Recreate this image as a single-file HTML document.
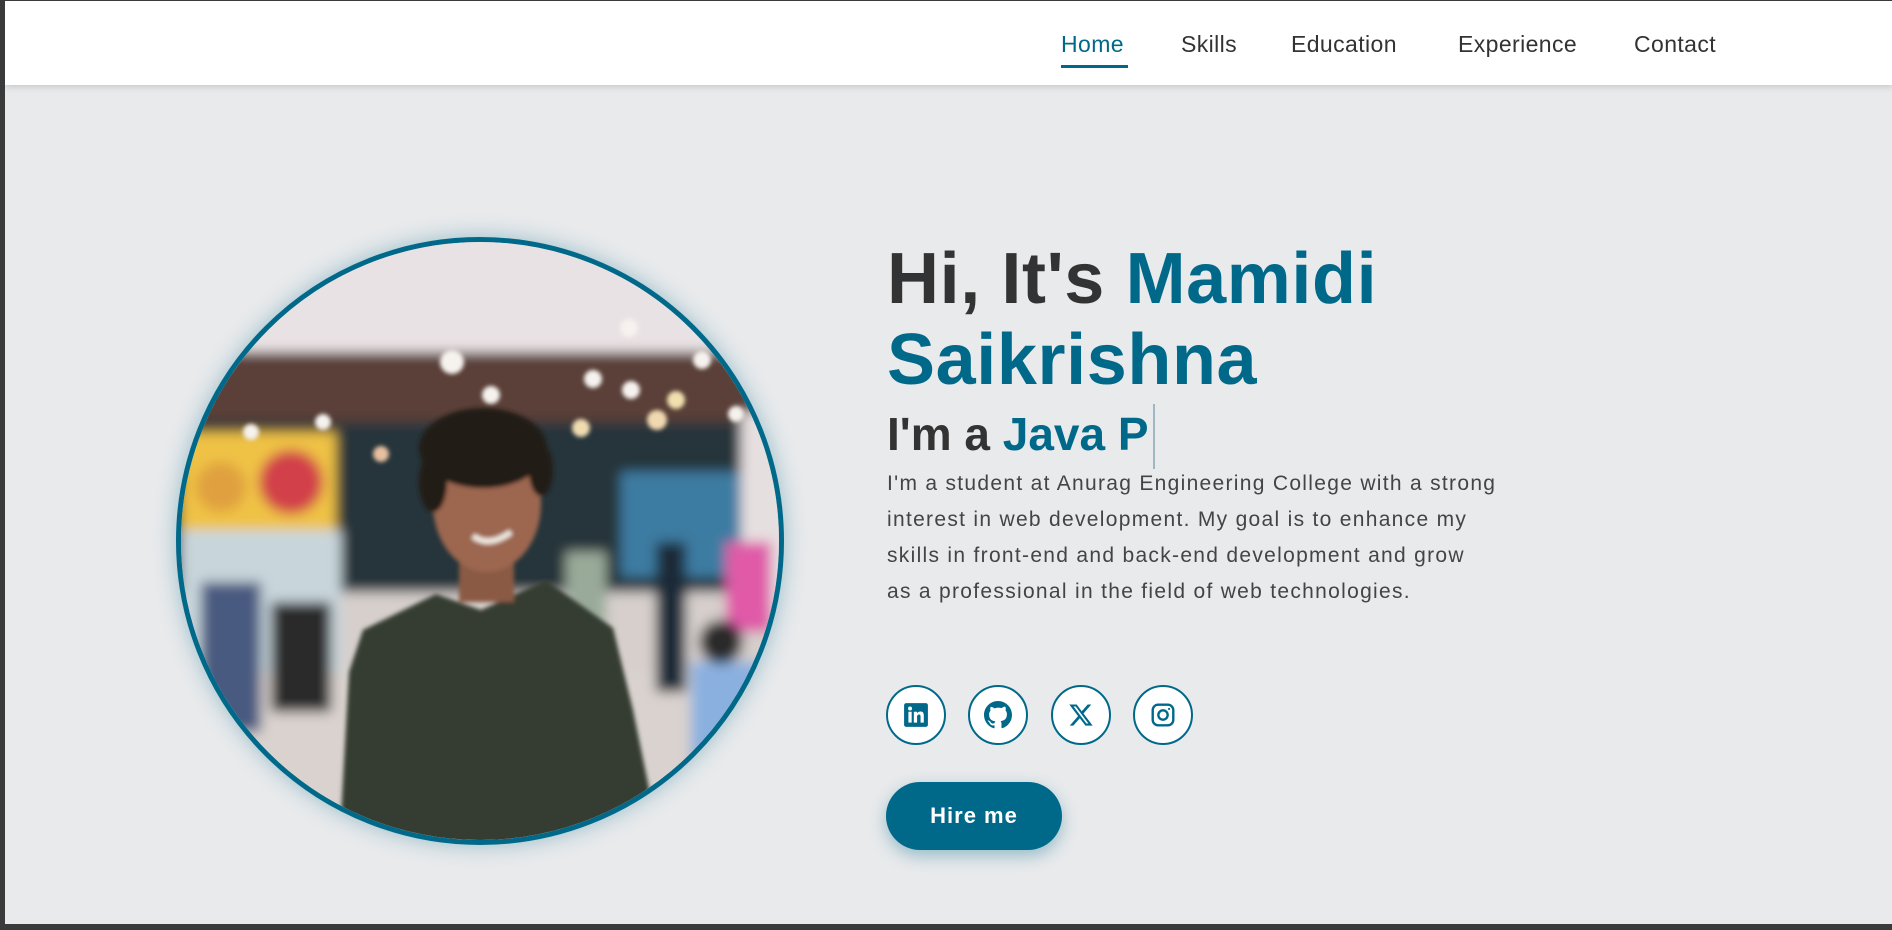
<!DOCTYPE html>
<html><head><meta charset="utf-8"><style>
*{margin:0;padding:0;box-sizing:border-box}
html,body{width:1892px;height:930px;overflow:hidden;background:#3a3a3a;font-family:"Liberation Sans",sans-serif}
#page{position:absolute;left:5px;top:1px;width:1887px;height:923px;background:#e8eaec;overflow:hidden}
#nav{position:absolute;left:0;top:0;width:100%;height:84px;background:#fff;box-shadow:0 2px 6px rgba(0,0,0,.15)}
.ni{position:absolute;top:30px;font-size:23px;line-height:26px;color:#333;letter-spacing:.4px}
.ni.a{color:#00698a}
.ul{position:absolute;left:1056px;top:64px;width:67px;height:3px;background:#00698a}
#pic{position:absolute;left:171px;top:236px;width:608px;height:608px;border-radius:50%;border:5px solid #00698a;box-shadow:0 0 22px rgba(0,105,138,.35);overflow:hidden;background:#ccc}
.t{position:absolute;left:882px;color:#333;font-weight:bold}
.b{color:#00698a}
#h1{top:238px;font-size:72px;line-height:81px;letter-spacing:.6px}
#h2{top:405px;font-size:46px;line-height:56px}
#cur{position:absolute;left:1148px;top:403px;width:2px;height:65px;background:#9bb8c4}
#p{position:absolute;left:882px;top:465px;font-size:21px;line-height:36px;color:#444;letter-spacing:1.3px}
.ic{position:absolute;top:684px;width:60px;height:60px;border-radius:50%;border:2px solid #00698a;background:#fff;display:flex;align-items:center;justify-content:center}
#btn{position:absolute;left:881px;top:781px;width:176px;height:68px;border-radius:34px;background:#00698a;color:#fff;font-weight:bold;font-size:22px;letter-spacing:1px;display:flex;align-items:center;justify-content:center;box-shadow:0 6px 16px rgba(0,105,138,.35)}
</style></head><body>
<div id="page">
<div id="nav">
<span class="ni a" style="left:1056px">Home</span>
<span class="ni" style="left:1176px">Skills</span>
<span class="ni" style="left:1286px">Education</span>
<span class="ni" style="left:1453px">Experience</span>
<span class="ni" style="left:1629px">Contact</span>
<div class="ul"></div>
</div>
<div id="pic">
<svg width="598" height="598" viewBox="0 0 598 598">
<defs><filter id="bl"><feGaussianBlur stdDeviation="6"/></filter><filter id="bl2"><feGaussianBlur stdDeviation="2"/></filter></defs>
<g filter="url(#bl)">
<rect x="-20" y="-20" width="640" height="640" fill="#d6cfcc"/>
<rect x="-20" y="-20" width="640" height="135" fill="#e9e2e4"/>
<rect x="-20" y="110" width="640" height="75" fill="#5a4038"/>
<rect x="-20" y="180" width="640" height="170" fill="#25363a"/>
<rect x="0" y="190" width="155" height="100" fill="#efc244"/>
<circle cx="110" cy="240" r="32" fill="#d2404a"/>
<circle cx="40" cy="245" r="25" fill="#e0a040"/>
<rect x="0" y="288" width="160" height="200" fill="#c8d6dc"/>
<rect x="440" y="230" width="125" height="105" fill="#3d7ca2"/>
<rect x="560" y="170" width="60" height="200" fill="#e6dfe0"/>
<rect x="-20" y="430" width="640" height="200" fill="#d9d2ce"/>
<rect x="20" y="340" width="60" height="150" fill="#4a5a80"/>
<rect x="90" y="360" width="60" height="110" fill="#2b2b2b"/>
<rect x="475" y="300" width="30" height="150" fill="#1e2a38"/>
<rect x="545" y="300" width="45" height="90" fill="#e05aa8"/>
<rect x="510" y="420" width="70" height="110" fill="#8ab0e0"/>
<circle cx="540" cy="400" r="22" fill="#2a2a2a"/>
<rect x="385" y="310" width="40" height="90" fill="#9aaa9a"/>
</g>
<g filter="url(#bl2)" fill="#f6f2ee">
<circle cx="448" cy="86" r="9"/><circle cx="271" cy="120" r="12"/><circle cx="521" cy="118" r="9"/>
<circle cx="310" cy="153" r="9"/><circle cx="412" cy="137" r="9"/><circle cx="450" cy="148" r="9"/>
<circle cx="142" cy="180" r="8"/><circle cx="70" cy="190" r="8"/><circle cx="495" cy="158" r="9" fill="#f0e0b0"/>
<circle cx="476" cy="178" r="10" fill="#f0d8b0"/><circle cx="400" cy="186" r="9" fill="#f0dcb0"/>
<circle cx="200" cy="212" r="8" fill="#e8c0a0"/><circle cx="555" cy="172" r="8"/>
</g>
<g filter="url(#bl2)">
<polygon points="158,610 168,430 182,388 255,352 300,368 365,338 432,386 452,468 470,556 480,610" fill="#363d30"/>
<rect x="278" y="300" width="55" height="60" fill="#8a5a44"/>
<ellipse cx="306" cy="262" rx="54" ry="68" fill="#9c6650"/>
<ellipse cx="302" cy="206" rx="64" ry="40" fill="#231a16"/>
<ellipse cx="252" cy="240" rx="14" ry="30" fill="#231a16"/>
<ellipse cx="360" cy="228" rx="12" ry="26" fill="#231a16"/>
<path d="M292 294 Q308 306 330 290" stroke="#f0e8e0" stroke-width="6" fill="none"/>
</g>
</svg>
</div>
<div class="t" id="h1">Hi, It's <span class="b">Mamidi<br>Saikrishna</span></div>
<div class="t" id="h2">I'm a <span class="b">Java P</span></div>
<div id="cur"></div>
<div id="p">I'm a student at Anurag Engineering College with a strong<br>interest in web development. My goal is to enhance my<br>skills in front-end and back-end development and grow<br>as a professional in the field of web technologies.</div>
<div class="ic" style="left:881px"><svg width="26" height="26" viewBox="0 0 24 24"><rect x="1" y="1" width="22" height="22" rx="2" fill="#00698a"/><rect x="5" y="9" width="3" height="10" fill="#fff"/><circle cx="6.5" cy="6" r="1.8" fill="#fff"/><path d="M10 9h3v1.5c.7-1.1 1.8-1.7 3.2-1.7 2.3 0 3 1.5 3 3.8V19h-3v-5.6c0-1.2-.4-1.9-1.4-1.9-1.1 0-1.8.8-1.8 2V19h-3z" fill="#fff"/></svg></div>
<div class="ic" style="left:963px"><svg width="28" height="28" viewBox="0 0 16 16"><path fill="#00698a" d="M8 0C3.580 0 0 3.58 0 8c0 3.54 2.29 6.53 5.47 7.59.4.07.55-.17.55-.38v-1.33c-2.23.48-2.7-1.07-2.7-1.070-.36-.93-.89-1.17-.89-1.17-.73-.5.05-.49.05-.49.8.06 1.23.83 1.23.83.72 1.23 1.88.87 2.34.67.07-.52.28-.87.51-1.07-1.78-.2-3.64-.89-3.64-3.95 0-.87.31-1.59.82-2.150-.08-.2-.36-1.02.08-2.12 0 0 .67-.21 2.2.82A7.6 7.6 0 0 1 8 3.8c.68 0 1.36.09 2 .27 1.53-1.04 2.2-.82 2.2-.82.44 1.1.16 1.92.08 2.12.51.56.82 1.27.82 2.15 0 3.07-1.87 3.75-3.65 3.95.29.25.54.73.54 1.48v2.2c0 .21.15.46.55.38A8.01 8.01 0 0 0 16 8c0-4.42-3.58-8-8-8z"/></svg></div>
<div class="ic" style="left:1046px"><svg width="26" height="26" viewBox="0 0 24 24"><path fill="#00698a" d="M18.2 2.3h3.3l-7.2 8.3 8.5 11.2h-6.7l-5.2-6.8-6 6.8H1.6l7.7-8.8L1.2 2.3h6.8l4.7 6.2zm-1.2 17.6h1.8L7.1 4.2H5.1z"/></svg></div>
<div class="ic" style="left:1128px"><svg width="26" height="26" viewBox="0 0 24 24" fill="none" stroke="#00698a" stroke-width="2.2"><rect x="2.5" y="2.5" width="19" height="19" rx="5"/><circle cx="12" cy="12" r="4.3"/><circle cx="17.6" cy="6.4" r="1" fill="#00698a" stroke="none"/></svg></div>
<div id="btn">Hire me</div>
</div>
</body></html>
